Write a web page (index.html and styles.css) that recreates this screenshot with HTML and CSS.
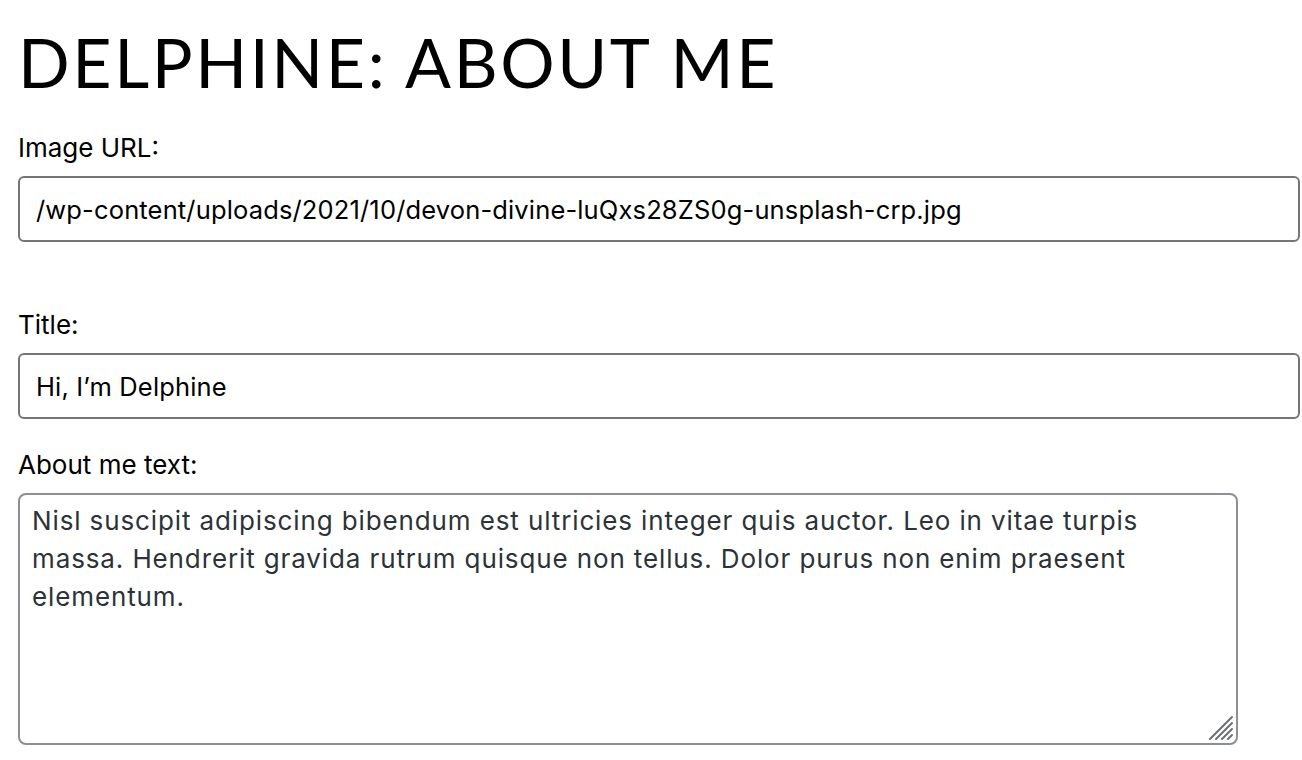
FILE: index.html
```html
<!DOCTYPE html>
<html>
<head>
<meta charset="utf-8">
<link rel="stylesheet" href="styles.css">
</head>
<body>
<div class="page">
  <h1 class="heading">DELPHINE: ABOUT ME</h1>
  <div class="field field-url">
    <label class="label">Image URL:</label>
    <input class="input" type="text" value="/wp-content/uploads/2021/10/devon-divine-luQxs28ZS0g-unsplash-crp.jpg">
  </div>
  <div class="field field-title">
    <label class="label">Title:</label>
    <input class="input" type="text" value="Hi, I’m Delphine">
  </div>
  <div class="field field-about">
    <label class="label">About me text:</label>
    <div class="textarea-wrap">
      <textarea class="textarea">Nisl suscipit adipiscing bibendum est ultricies integer quis auctor. Leo in vitae turpis massa. Hendrerit gravida rutrum quisque non tellus. Dolor purus non enim praesent elementum.</textarea>
      <svg class="grip" width="26" height="26" viewBox="0 0 26 26">
        <g stroke="#6b6e73" stroke-width="2" stroke-linecap="round">
          <line x1="2" y1="24" x2="24" y2="2"/>
          <line x1="8" y1="24" x2="24" y2="8"/>
          <line x1="14" y1="24" x2="24" y2="14"/>
          <line x1="20" y1="24" x2="24" y2="20"/>
        </g>
      </svg>
    </div>
  </div>
</div>
</body>
</html>
```

FILE: styles.css
```css
html, body {
  margin: 0;
  padding: 0;
  background: #fff;
}
.page {
  padding: 0 2px 0 18px;
  font-family: Inter, "Liberation Sans", sans-serif;
  color: #000;
}
.heading {
  margin: 0;
  padding-top: 22px;
  font-family: Lato, "Noto Sans", sans-serif;
  font-weight: 400;
  font-size: 68px;
  letter-spacing: 2.6px;
  line-height: 80px;
  color: #000;
}
.field {
  display: flex;
  flex-direction: column;
}
.label {
  font-size: 26px;
  line-height: 32px;
  color: #000;
  margin-bottom: 12px;
}
.field-url { margin-top: 30px; }
.field-title { margin-top: 67px; }
.field-about { margin-top: 30px; }
.input {
  box-sizing: border-box;
  height: 66px;
  width: 100%;
  margin: 0;
  border: 2px solid #757575;
  border-radius: 6px;
  padding: 0 16px;
  font-family: Inter, "Liberation Sans", sans-serif;
  font-size: 25.5px;
  letter-spacing: 0.15px;
  color: #000;
  background: #fff;
  outline: none;
}
.textarea-wrap {
  position: relative;
  width: 1220px;
  height: 252px;
}
.textarea {
  display: block;
  box-sizing: border-box;
  width: 100%;
  height: 100%;
  margin: 0;
  border: 2px solid #8c8f94;
  border-radius: 8px;
  padding: 7px 12px;
  font-family: Inter, "Liberation Sans", sans-serif;
  font-size: 26px;
  letter-spacing: 0.88px;
  line-height: 38px;
  color: #2c3338;
  resize: none;
  outline: none;
}
.grip {
  position: absolute;
  right: 4px;
  bottom: 4px;
}
```
